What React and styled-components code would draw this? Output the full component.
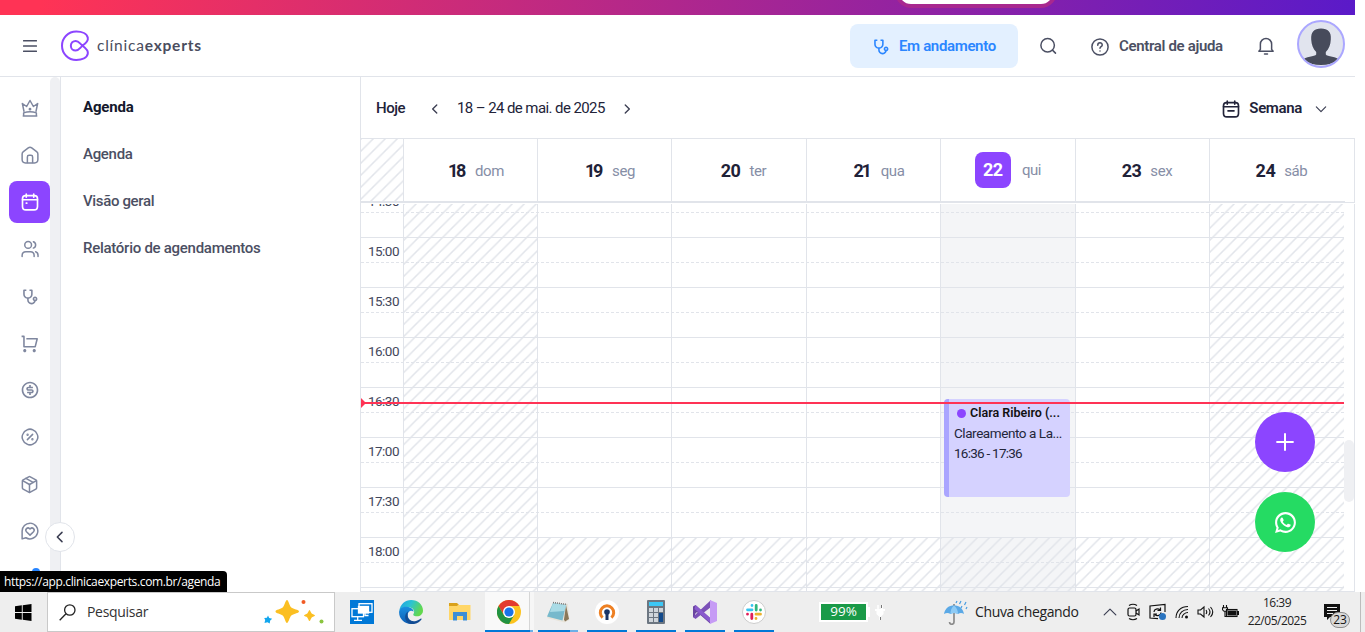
import React from "react";
import styled, { createGlobalStyle, css } from "styled-components";
import { Package } from "lucide-react";
import {
  RiStethoscopeLine,
  RiShoppingCartLine,
  RiMoneyDollarCircleLine,
  RiWhatsappLine,
} from "react-icons/ri";

const line = "#e1e4ea";
const purple = "#8c45ff";
const ui = `Roboto, "Liberation Sans", sans-serif`;
const system = `"Open Sans", "Noto Sans", sans-serif`;

const GlobalStyle = createGlobalStyle`
  * { box-sizing: border-box; }
  html, body { margin: 0; padding: 0; background: #fff; overflow: hidden; }
  body { font-family: ${ui}; }
  svg { flex: none; }
`;

const hatch = css`
  background-image: linear-gradient(
    135deg,
    ${line} 2.5%,
    transparent 6%,
    transparent 44%,
    ${line} 47.5%,
    ${line} 52.5%,
    transparent 56%,
    transparent 94%,
    ${line} 97.5%
  );
  background-size: 12.02px 12.02px;
`;

const Screen = styled.div`
  position: relative;
  width: 1365px;
  height: 632px;
  display: flex;
  flex-direction: column;
  background: #fff;
  overflow: hidden;
`;

const Label = styled.span`
  font-family: ${(p) => p.$font || ui};
  font-size: ${(p) => p.$size || 15}px;
  font-weight: ${(p) => p.$weight || 400};
  color: ${(p) => p.$color || "#222339"};
  letter-spacing: ${(p) => p.$ls || 0}px;
  line-height: 1.3;
  white-space: nowrap;
`;

/* ---------- promotional strip and header ---------- */

const Strip = styled.div`
  flex: none;
  width: 1355px;
  height: 15px;
  display: flex;
  padding-left: 895px;
  background: linear-gradient(100deg, #ff3355 3%, #5a1ac9 100%);
  overflow: hidden;
`;

const StripPill = styled.div`
  width: 162px;
  height: 32px;
  margin-top: -24px;
  border: 4px solid #a8288f;
  border-radius: 16px;
  background: #fff;
`;

const Header = styled.header`
  flex: none;
  width: 1355px;
  height: 62px;
  display: flex;
  align-items: center;
  border-bottom: 1px solid ${line};
  padding: 1px 10px 0 23px;
`;

const Brand = styled.div`
  display: flex;
  align-items: center;
  gap: 7px;
  margin-left: 23px;
  padding-bottom: 1px;
  flex: 1;
`;

const StatusButton = styled.button`
  display: flex;
  align-items: center;
  gap: 9px;
  width: 168px;
  height: 44px;
  padding: 1px 0 0 21px;
  border: 0;
  border-radius: 8px;
  background: #e3f0ff;
  color: #2b86ff;
`;

const HelpLink = styled.div`
  display: flex;
  align-items: center;
  gap: 10px;
  margin-left: 34px;
  padding-top: 1px;
  width: 133px;
`;

const Bell = styled.div`
  margin-left: 33px;
  display: flex;
`;

const SearchAction = styled.div`
  display: flex;
  margin-left: 21px;
`;

const Avatar = styled.div`
  width: 48px;
  height: 48px;
  margin: -4px 0 0 22px;
  border-radius: 50%;
  border: 2px solid #aba7ff;
  background: #e1e4ee;
  overflow: hidden;
`;

/* ---------- sidebar ---------- */

const Main = styled.div`
  flex: none;
  height: 515px;
  width: 1355px;
  display: flex;
  overflow: hidden;
`;

const Rail = styled.nav`
  flex: none;
  width: 50px;
  display: flex;
  flex-direction: column;
  padding: 10px 0 0 9px;
  gap: 5px;
`;

const RailItem = styled.div`
  flex: none;
  width: 41px;
  height: 42px;
  display: flex;
  align-items: center;
  justify-content: center;
  border-radius: 8px;
  color: ${(p) => (p.$active ? "#fff" : "#7f879f")};
  background: ${(p) => (p.$active ? purple : "transparent")};
`;

const RailTrack = styled.div`
  flex: none;
  width: 10px;
  border-radius: 5px 5px 0 0;
  background: #eff0f3;
`;

const Submenu = styled.aside`
  flex: none;
  width: 301px;
  border-left: 1px solid ${line};
  border-right: 1px solid ${line};
  padding: 17px 0 0 22px;
  display: flex;
  flex-direction: column;
`;

const SubmenuItem = styled(Label)`
  height: 47px;
  line-height: 26px;
`;

const CollapseButton = styled.div`
  position: absolute;
  left: 45px;
  top: 522px;
  width: 30px;
  height: 30px;
  border-radius: 50%;
  border: 1px solid ${line};
  background: #fff;
  display: flex;
  align-items: center;
  justify-content: center;
`;

const RailBadge = styled.div`
  position: absolute;
  left: 32px;
  top: 568px;
  width: 8px;
  height: 8px;
  border-radius: 50%;
  background: #2684ff;
`;

const LinkTooltip = styled.div`
  position: absolute;
  left: 0;
  top: 571px;
  width: 227px;
  height: 21px;
  padding-left: 4px;
  display: flex;
  align-items: center;
  background: #000;
  border-top-right-radius: 4px;
`;

/* ---------- calendar ---------- */

const Calendar = styled.section`
  position: relative;
  flex: 1;
  display: flex;
  flex-direction: column;
  border-bottom: 1px solid ${line};
`;

const Toolbar = styled.div`
  flex: none;
  height: 61px;
  padding: 2px 27px 0 15px;
  display: flex;
  align-items: center;
`;

const Spacer = styled.div`
  flex: 1;
`;

const Arrow = styled.div`
  display: flex;
  margin: ${(p) => p.$m};
`;

const columns = "43px 134px 134px 135px 134px 135px 134px";

const DaysHeader = styled.div`
  flex: none;
  height: 65px;
  display: grid;
  grid-template-columns: ${columns} 145px;
  border-top: 1px solid ${line};
  border-bottom: 1px solid ${line};
  position: relative;
  &::after {
    content: "";
    position: absolute;
    left: 0;
    right: 10px;
    bottom: -1px;
    height: 2px;
    background: ${line};
  }
`;

const Corner = styled.div`
  ${hatch};
  border-right: 1px solid ${line};
`;

const DayHead = styled.div`
  display: flex;
  align-items: center;
  justify-content: center;
  gap: ${(p) => (p.$today ? 11 : 9)}px;
  padding-top: ${(p) => (p.$today ? 0 : 1)}px;
  padding-bottom: ${(p) => (p.$today ? 1 : 0)}px;
  padding-left: ${(p) => (p.$today ? 0 : 9)}px;
  padding-right: ${(p) => (p.$last ? 10 : 0)}px;
  border-right: 1px solid ${line};
`;

const DayNumber = styled(Label)`
  letter-spacing: ${(p) => (p.$narrow ? -2.3 : -0.5)}px;
  margin: 0 ${(p) => (p.$narrow ? 2 : 0)}px;
`;

const DayName = styled(Label)`
  padding-top: 2px;
`;

const TodayBox = styled.div`
  width: 36px;
  height: 36px;
  border-radius: 8px;
  background: ${purple};
  display: flex;
  align-items: center;
  justify-content: center;
`;

const Body = styled.div`
  position: relative;
  flex: 1;
  margin-top: 1px;
  border-right: 1px solid ${line};
  overflow: hidden;
`;

const ColumnLayer = styled.div`
  position: absolute;
  inset: 0 9px 0 0;
  display: grid;
  grid-template-columns: ${columns} 134px;
`;

const Column = styled.div`
  display: flex;
  flex-direction: column;
  border-right: ${(p) => (p.$last ? 0 : 1)}px solid ${line};
  background: ${(p) => (p.$today ? "#f4f5f7" : "transparent")};
`;

const OffHours = styled.div`
  ${hatch};
  height: ${(p) => (p.$full ? "100%" : "53px")};
  margin-top: ${(p) => (p.$full ? 0 : 334)}px;
`;

const SlotList = styled.div`
  position: relative;
  width: 983px;
`;

const Slot = styled.div`
  height: ${(p) => (p.$first ? 9 : 25)}px;
  display: flex;
  align-items: flex-end;
  border-bottom: 1px ${(p) => (p.$half ? "solid" : "dashed")} ${line};
`;

const SlotTime = styled.div`
  flex: none;
  width: 42px;
  height: 24px;
  padding: 3px 4px 0 0;
  display: flex;
  align-items: center;
  justify-content: flex-end;
`;

const Appointment = styled.div`
  position: absolute;
  left: 583px;
  top: 195px;
  width: 126px;
  height: 98px;
  padding: 4px 3px 0 5px;
  border-left: 5px solid #aaa5ff;
  border-radius: 4px;
  background: #d5d2ff;
  display: flex;
  flex-direction: column;
`;

const AppointmentRow = styled.div`
  display: flex;
  align-items: center;
  gap: 4px;
  height: 20.3px;
  padding-left: ${(p) => (p.$title ? 3 : 0)}px;
`;

const Dot = styled.i`
  flex: none;
  width: 9px;
  height: 9px;
  border-radius: 50%;
  background: ${purple};
`;

const NowLine = styled.div`
  position: absolute;
  left: 0;
  top: 198px;
  width: 983px;
  height: 2px;
  background: #ff3355;
  &::before {
    content: "";
    position: absolute;
    left: 0;
    top: -4px;
    border: 5px solid transparent;
    border-left-color: #ff3355;
    border-right-width: 0;
  }
`;

const Thumb = styled.div`
  position: absolute;
  right: 1px;
  top: 363px;
  width: 10px;
  height: 62px;
  border-radius: 5px;
  background: #eff0f3;
`;

const Fab = styled.div`
  position: absolute;
  left: 1255px;
  top: ${(p) => p.$top}px;
  width: 60px;
  height: 60px;
  border-radius: 50%;
  background: ${(p) => p.$bg};
  color: #fff;
  display: flex;
  align-items: center;
  justify-content: center;
`;

/* ---------- taskbar ---------- */

const Taskbar = styled.footer`
  flex: none;
  height: 40px;
  display: flex;
  background: #eee;
`;

const Start = styled.div`
  width: 47px;
  display: flex;
  align-items: center;
  padding-left: 15px;
`;

const SearchBox = styled.div`
  width: 288px;
  height: 40px;
  display: flex;
  align-items: center;
  gap: 11px;
  border: 1px solid #c9c9c9;
  background: #fff;
  padding: 0 9px 0 11px;
`;

const TaskApps = styled.div`
  display: flex;
  margin-left: 3px;
`;

const TaskApp = styled.div`
  position: relative;
  width: 49px;
  height: 40px;
  display: flex;
  align-items: center;
  justify-content: center;
  padding-right: 1px;
  background: ${(p) => (p.$active ? "linear-gradient(90deg,#f9f9f9 44px,#d6d6d6 44px 45px,#f6f6f6 45px)" : "none")};
  &::after {
    content: "";
    display: ${(p) => (p.$open ? "block" : "none")};
    position: absolute;
    bottom: 0;
    left: ${(p) => (p.$active ? 0 : 4)}px;
    width: ${(p) => (p.$active ? 48 : 40)}px;
    height: 2px;
    background: ${(p) =>
      p.$stacked
        ? `linear-gradient(90deg,#0078d7 ${p.$stacked}px,#6cb0e8 ${p.$stacked}px)`
        : "#0078d7"};
  }
`;

const Battery = styled.div`
  width: 49px;
  height: 20px;
  margin: 10px 0 0 40px;
  border: 2px solid #fff;
  background: #1a9a48;
  display: flex;
  align-items: center;
  justify-content: center;
`;

const Nub = styled.div`
  width: 2px;
  height: 10px;
  margin-top: 15px;
  background: #fff;
`;

const Plug = styled.div`
  display: flex;
  margin: 12px 0 0 4px;
`;

const Weather = styled.div`
  display: flex;
  align-items: center;
  gap: 7px;
  margin-left: 58px;
  width: 159px;
`;

const Tray = styled.div`
  display: flex;
  align-items: center;
  gap: 8px;
`;

const Clock = styled.div`
  width: 74px;
  display: flex;
  flex-direction: column;
  align-items: center;
  padding-top: 3px;
  margin-left: 1px;
  gap: 2px;
`;

const Notices = styled.div`
  display: flex;
  margin: 12px 0 0 10px;
  position: relative;
`;

const NoticeCount = styled.div`
  position: absolute;
  left: 6px;
  top: 8px;
  width: 20px;
  height: 16px;
  border-radius: 8px;
  border: 1px solid #8d8d8d;
  background: #d9d9d9;
  display: flex;
  align-items: center;
  justify-content: center;
`;

const ShowDesktop = styled.div`
  width: 1px;
  margin: 0 4px 0 auto;
  background: #bcbcbc;
`;

/* ---------- icons ---------- */

const Stroke = ({ size = 18, w = 2, color = "currentColor", children }) => (
  <svg width={size} height={size} viewBox="0 0 24 24" fill="none" stroke={color} strokeWidth={w} strokeLinecap="round" strokeLinejoin="round">
    {children}
  </svg>
);

const Crown = () => (
  <Stroke>
    <path d="M4 16.500 1.800 6l5.700 4L12 2l4.500 8 5.700-4L20 16.500" />
    <path d="M3 22.500h18M3.500 22.500v-4q8.500-3 17 0v4" />
    <circle cx="12" cy="13.500" r=".9" fill="currentColor" />
  </Stroke>
);

const Home = () => (
  <Stroke>
    <path d="M1.500 10.800c0-1.500.5-2.400 1.700-3.300l6.500-5c1.400-1.100 3.200-1.100 4.600 0l6.500 5c1.200.9 1.700 1.800 1.700 3.300V18c0 2.500-1.500 4.500-4.500 4.500H6c-3 0-4.500-2-4.500-4.500z" />
    <path d="M8.500 22v-7.500c0-1.400.8-2.200 2.200-2.200h2.600c1.400 0 2.200.8 2.200 2.200V22" />
  </Stroke>
);

const CalendarIcon = ({ kind, color }) => (
  <Stroke w={2.200} color={color}>
    <path d="M7 1.500v4M17 1.500v4M2 9h20" />
    <path d="M6 3.500h12c2.500 0 4 1.500 4 4V18c0 2.800-1.500 4.500-4.500 4.500h-11C3.500 22.500 2 20.800 2 18V7.500c0-2.500 1.500-4 4-4z" />
    {kind === "dot" ? <path d="M7 13.500h.8" /> : <path d="M8 14.500h8" />}
  </Stroke>
);

const Users = () => (
  <Stroke>
    <circle cx="9.500" cy="6.500" r="4.500" />
    <path d="M1.500 22v-1.500c0-3 2-5 5-5h6c3 0 5 2 5 5V22M16.500 2.300a4.500 4.500 0 0 1 0 8.500M19.500 15.700c2 .7 3.200 2.400 3.200 4.600V22" />
  </Stroke>
);

const Discount = () => (
  <Stroke>
    <path d="M8 2.600q4-2.200 8 0 4 1.300 5.400 5.400 2.200 4 0 8-1.400 4.100-5.400 5.400-4 2.200-8 0-4-1.300-5.400-5.400-2.200-4 0-8Q4 3.900 8 2.600z" />
    <path d="M8.500 15.500l7-7" />
    <circle cx="8.800" cy="9" r=".6" fill="currentColor" />
    <circle cx="15.200" cy="15" r=".6" fill="currentColor" />
  </Stroke>
);

const ChatHeart = () => (
  <Stroke>
    <path d="M12 1.500A10.500 10.500 0 1 1 6.500 21L1.500 22.500V12A10.500 10.500 0 0 1 12 1.500z" />
    <path d="M12 17.500l-4.700-4.600a2.900 2.900 0 0 1 4.100-4.100l.6.600.6-.6a2.900 2.900 0 0 1 4.100 4.100z" />
  </Stroke>
);

const Logo = () => (
  <svg width="30" height="32" viewBox="0 0 30 32" fill="none" stroke={purple} strokeWidth="2" strokeLinejoin="round">
    <path d="M22.500 15.700C26.500 13 28.400 11 27.800 7.800 27 3.800 22 1.600 16.300 1.600 8 1.600 2 8 2 15.700s6 14.200 14.300 14.200c5.700 0 10.700-2.200 11.500-6.200.6-3.200-1.300-5.200-5.300-8C20 13.800 18.800 10.900 15.700 10.900a4.800 4.800 0 0 0 0 9.700c3.100 0 4.300-3 6.800-4.900z" />
  </svg>
);

const Chevron = ({ dir, size = 14, w = 2.3 }) => {
  const d = { left: "M15 5l-7 7 7 7", right: "M9 5l7 7-7 7", down: "M4 8.500l8 8 8-8", up: "M2 17L12 7l10 10" }[dir];
  return (
    <Stroke size={size} w={w} color="#3b3e52">
      <path d={d} />
    </Stroke>
  );
};

const Person = () => (
  <svg width="44" height="44" viewBox="0 0 44 44" fill="#474b5b">
    <path d="M22 6.500c7 0 10.500 3.500 9.800 11-.2 5-1.800 9.500-5 12.500v2.500c1 2 11.500 2 13.500 5.500Q32 42 22 42T3.700 38c2-3.500 12.500-3.500 13.500-5.500V30c-3.200-3-4.700-7.500-5-12.500C11.800 10 15 6.500 22 6.500z" />
    <path d="M3.700 37.500h36.600Q32 43 22 43T3.700 37.500z" />
  </svg>
);

const Windows = () => (
  <svg width="17" height="17" viewBox="0 0 17 17">
    <path d="M0 2.300 6.800 1.300V8H0zM7.700 1.200 16.500 0v8H7.700zM0 9h6.800v6.700L0 14.700zM7.700 9h8.800v8l-8.800-1.200z" />
  </svg>
);

const Magnifier = () => (
  <svg width="17" height="17" viewBox="0 0 17 17" fill="none" stroke="#222" strokeWidth="1.300">
    <circle cx="10.800" cy="6" r="5.200" />
    <path d="M7 9.800.7 16.200" />
  </svg>
);

const Sparkles = () => (
  <svg width="62" height="26" viewBox="0 0 62 26">
    <path d="M24 1c1.500 0 2.500 6 4.300 7.500S36 10.700 36 12.500s-6 2.300-7.700 4S25.500 24 24 24s-2.500-6-4.300-7.500-7.200-2.200-7.200-4 5.500-2.500 7.200-4S22.500 1 24 1z" fill="#fbbf22" />
    <path d="M46.500 11c.7 0 1.300 2.700 2.200 3.500s3.300 1.200 3.300 1.900-2.600 1.200-3.300 2-1.500 3.600-2.200 3.600-1.500-2.800-2.200-3.600-3.300-1.200-3.300-1.900 2.400-1.200 3.300-2 1.500-3.500 2.200-3.500z" fill="#fbbf22" />
    <path d="M5 16.500l1.200 2.500 3 .7-2 1.800-.5 3-2.200-1.200-3 .7.700-3-1-2 2.700-.3z" fill="#12a6ee" />
    <circle cx="40.500" cy="3" r="2" fill="#f15a24" />
    <circle cx="58.500" cy="22.500" r="2" fill="#8bc540" />
  </svg>
);

const Remote = () => (
  <svg width="24" height="24" viewBox="0 0 24 24" fill="none" stroke="#fff" strokeWidth="1.300">
    <rect width="24" height="24" fill="#0078d7" stroke="none" />
    <rect x="9" y="3.700" width="13" height="8.600" />
    <rect x="2" y="8.700" width="11.500" height="8" fill="#0078d7" />
    <rect x="8.500" y="6.500" width="10" height="6.500" fill="#fff" />
    <path d="M7.700 17v3M4 20.300h8M15 13v2.500h3.500" />
  </svg>
);

const Edge = () => (
  <svg width="24" height="24" viewBox="0 0 24 24">
    <defs>
      <linearGradient id="edgeTop" x1="0" y1="0" x2="1" y2=".4">
        <stop offset="0" stopColor="#1d9fe6" />
        <stop offset=".5" stopColor="#2cc3d2" />
        <stop offset="1" stopColor="#62d84e" />
      </linearGradient>
      <linearGradient id="edgeLow" x1="0" y1="0" x2="0" y2="1">
        <stop offset="0" stopColor="#1a8fe0" />
        <stop offset="1" stopColor="#0d5db3" />
      </linearGradient>
    </defs>
    <path d="M.3 11C1 4.500 6 0 12.200 0 19 0 24 4.700 24 10.500c0 3.500-2.700 5.800-6 5.800-3.600 0-4.200-1.300-3.400-2.500 1.300-2 .5-5.300-3.500-6.300C6.500 6.500 1.500 8 .3 11z" fill="url(#edgeTop)" />
    <path d="M.1 12.500C.1 8.600 3.500 6.200 8 6.800c4 .5 6.600 2.500 6.500 5-2-2-6-.8-5.700 3.700.2 4.500 5 7.300 9.200 6.400C15.500 23.500 13.800 24 12 24 5.400 24 .1 18.700.1 12.500z" fill="url(#edgeLow)" />
    <path d="M9.300 11.500c-2.800 5.500 1.200 10.700 6.700 9.700 2.500-.3 4.500-1.600 5.900-2.600.4-.3 1 .2.700.7-2.200 3.600-7 5.500-11.600 4.500-5.700-1.600-6.600-9.800-1.700-12.300z" fill="#124c93" />
  </svg>
);

const Folder = () => (
  <svg width="22" height="20" viewBox="0 0 22 20">
    <path d="M0 1h8l2 2v4H0z" fill="#d9a11b" />
    <path d="M9 3h12.500v15H0V4h8z" fill="#ffd667" />
    <path d="M4 10h14v8.500h-4V14H8v4.500H4z" fill="#3c8fd6" />
  </svg>
);

const Chrome = () => (
  <svg width="24" height="24" viewBox="0 0 24 24">
    <circle cx="12" cy="12" r="12" fill="#fcc31e" />
    <path d="M1.600 6A12 12 0 0 1 22.400 6H12L7 15z" fill="#e33b2e" />
    <path d="M1.600 6A12 12 0 0 0 12 24l5.200-9L12 18 6.800 15z" fill="#229342" />
    <circle cx="12" cy="12" r="6" fill="#fff" />
    <circle cx="12" cy="12" r="4.600" fill="#1a73e8" />
  </svg>
);

const Notepad = () => (
  <svg width="24" height="24" viewBox="0 0 24 24">
    <path d="M8 3l14 1 1.500 16-5 2.500L1 18z" fill="#e8e4da" />
    <path d="M20 5l3 14-4 2.500-1-2z" fill="#8a7758" />
    <path d="M7 3l13 2-3.500 15.500L1 16.500z" fill="#76b9cc" />
    <path d="M7 3l13 2-1.500 6L4 12z" fill="#a9dbe6" />
    <path d="M7 2.500l14 2" stroke="#777" strokeWidth="1.500" strokeDasharray="1 1" />
  </svg>
);

const OpenVpn = () => (
  <svg width="24" height="24" viewBox="0 0 24 24">
    <circle cx="12" cy="12" r="12" fill="#fff" />
    <path d="M7.600 17.600a6.700 6.700 0 1 1 8.800 0" fill="none" stroke="#ee8023" strokeWidth="3" />
    <circle cx="12" cy="12" r="2.800" fill="#1b3566" />
    <path d="M10.500 13h3v7h-3z" fill="#1b3566" />
  </svg>
);

const Calculator = () => (
  <svg width="18" height="24" viewBox="0 0 18 24">
    <rect width="18" height="24" rx="1" fill="#6c7681" />
    <rect x="2" y="2" width="14" height="4" fill="#3cc7f5" />
    <g fill="#cfd5db">
      {[8, 13, 18].map((y) =>
        [2, 7, 12].map((x) => <rect key={`${x}-${y}`} x={x} y={y} width="4" height="4" />)
      )}
    </g>
    <rect x="12" y="13" width="4" height="9" fill="#124a8c" />
  </svg>
);

const VisualStudio = () => (
  <svg width="24" height="24" viewBox="0 0 24 24">
    <path d="M0 6.500 2.500 5 17 18v5.500L4 12l-2 2v4L0 17z" fill="#6a45a0" />
    <path d="M0 17l2.500 2L18 7V0L3 14z" fill="#7c51b8" />
    <path d="M2.500 5 18 18.500v5L1.500 9z" fill="#8a5bcd" />
    <path d="M17 0l7 3v18l-7 3z" fill="#c69bf5" />
  </svg>
);

const Slack = () => (
  <svg width="24" height="24" viewBox="0 0 24 24">
    <circle cx="12" cy="12" r="11.500" fill="#fff" stroke="#ccc" />
    <g strokeWidth="2.800" strokeLinecap="round">
      <path d="M10 5.500h.01M5.500 9.800H10" stroke="#36c5f0" />
      <path d="M18.500 10h.01M14.200 5.500V10" stroke="#2eb67d" />
      <path d="M14 18.500h.01M14 14.200h4.500" stroke="#ecb22e" />
      <path d="M5.500 14.200h.01M9.800 14.200v4.300" stroke="#e01e5a" />
    </g>
  </svg>
);

const PlugIcon = () => (
  <svg width="12" height="17" viewBox="0 0 12 17">
    <path d="M1 5h10v2H9.500v3L7 12.500H5L2.500 10V7H1z" fill="#fff" />
    <path d="M4 1v4M8 1v4M6 12v4" stroke="#fff" strokeWidth="1.500" />
    <path d="M7.500 1v3M6.500 13v3" stroke="#777" strokeWidth="1" />
  </svg>
);

const Umbrella = () => (
  <svg width="24" height="25" viewBox="0 0 24 25">
    <path d="M10 4v18c0 3-4.500 3-4.500 0" fill="none" stroke="#8b8b8b" strokeWidth="1.700" />
    <path d="M0 14C1 8 5 5.500 10 5.500S19 8 20 14q-3-2-6 0-4-2-7.500 0-3-2-6.500 0z" fill="#5ba9e6" />
    <path d="M10 5.500C7 8 6.500 11 6.500 14q3.500-2 7.500 0c0-3-1-6-4-8.500z" fill="#8fcbf5" />
    <path d="M13 1l-1 2M17 1l-1.500 3M22 2l-1.500 3M18 6l-1 2M23 7l-1 2" stroke="#4a9de0" strokeWidth="1.200" />
  </svg>
);

const Meet = () => (
  <svg width="14" height="18" viewBox="0 0 14 18" fill="none" stroke="#111" strokeWidth="1.200">
    <path d="M2 2.500q4-2.500 8 0M2 15.500q4 2.500 8 0" />
    <rect x="1" y="5" width="8" height="8" rx="1.500" />
    <path d="M9 8l3-2v6l-3-2" />
  </svg>
);

const Sync = () => (
  <svg width="18" height="18" viewBox="0 0 18 18" fill="none" stroke="#111" strokeWidth="1.200">
    <path d="M16 9V1.500L1 3v12l8 .7M5 9c0-3 4-4 6-2M11.500 4.500v3H8.500M12 9.500c0 3-4 4-6 2M5 14v-3h3" />
    <circle cx="13.500" cy="13.500" r="3.500" fill="#2a74c0" stroke="none" />
  </svg>
);

const Wifi = () => (
  <svg width="14" height="14" viewBox="0 0 14 14" fill="none" stroke="#111" strokeWidth="1.100">
    <path d="M1 13C1 6 6 1.500 13 1.500M4 13c0-5 4-8.500 9-8.500M7 13c0-3 3-5.500 6-5.500" />
    <circle cx="11.500" cy="12" r="1.500" fill="#111" stroke="none" />
  </svg>
);

const Speaker = () => (
  <svg width="17" height="14" viewBox="0 0 17 14" fill="none" stroke="#111" strokeWidth="1.100">
    <path d="M1 5h2.500L7 2v10L3.500 9H1zM9 5q1.500 2 0 4M11.500 3.500q3 3.500 0 7M13.500 2q4.500 5 0 10" />
  </svg>
);

const BatteryIcon = () => (
  <svg width="17" height="14" viewBox="0 0 17 14" fill="none" stroke="#111" strokeWidth="1.100">
    <rect x="4.500" y="4.500" width="10.500" height="7" />
    <path d="M6 6h7.500v4H6zM15.500 6.500h1v3h-1z" fill="#111" />
    <path d="M1.500 0v2.500M4.500 0v2.500M.5 2.800h5v2l-1.500 1.500H2L.5 4.800zM3 6v5.500h2" />
  </svg>
);

const Message = () => (
  <svg width="17" height="17" viewBox="0 0 17 17">
    <path d="M0 0h16v13H6l-3 3v-3H0z" fill="#111" />
    <path d="M3 3.500h10M3 6.500h10M3 9.500h6" stroke="#eee" strokeWidth="1" />
  </svg>
);

/* ---------- data ---------- */

const railIcons = [
  <Crown />,
  <Home />,
  <CalendarIcon kind="dot" />,
  <Users />,
  <RiStethoscopeLine size={19} />,
  <RiShoppingCartLine size={19} />,
  <RiMoneyDollarCircleLine size={20} />,
  <Discount />,
  <Package size={19} strokeWidth={1.9} />,
  <ChatHeart />,
];

const days = [
  { n: 18, name: "dom", off: true },
  { n: 19, name: "seg" },
  { n: 20, name: "ter" },
  { n: 21, name: "qua" },
  { n: 22, name: "qui", today: true },
  { n: 23, name: "sex" },
  { n: 24, name: "sáb", off: true },
];

const slots = ["14:30", "", "15:00", "", "15:30", "", "16:00", "", "16:30", "", "17:00", "", "17:30", "", "18:00", "", ""];

const apps = [
  { icon: <Remote /> },
  { icon: <Edge /> },
  { icon: <Folder /> },
  { icon: <Chrome />, open: true, active: true, stacked: 45 },
  { icon: <Notepad />, open: true, stacked: 32 },
  { icon: <OpenVpn />, open: true },
  { icon: <Calculator />, open: true },
  { icon: <VisualStudio />, open: true },
  { icon: <Slack />, open: true },
];

export default function App() {
  return (
    <Screen>
      <GlobalStyle />
      <Strip>
        <StripPill />
      </Strip>
      <Header>
        <Stroke size={14} w={2.600} color="#4b4f63">
          <path d="M1 3h22M1 12h22M1 21h22" />
        </Stroke>
        <Brand>
          <Logo />
          <Label $font={`Lato, sans-serif`} $size={15.500} $color="#4a4d5e" $ls={0.780}>
            clínica<b>experts</b>
          </Label>
        </Brand>
        <StatusButton>
          <RiStethoscopeLine size={19} />
          <Label $weight={600} $color="#2b86ff" $ls={-0.350}>Em andamento</Label>
        </StatusButton>
        <SearchAction>
          <Stroke size={18} color="#4b4f63">
            <circle cx="11.500" cy="11" r="9" />
            <path d="M18 17.500l4 4" />
          </Stroke>
        </SearchAction>
        <HelpLink>
          <Stroke size={18} color="#4b4f63">
            <circle cx="12" cy="12" r="10.800" />
            <path d="M9 9.500c0-4 6-4 6-.3 0 2.300-3 2.300-3 4.500M12 17.200v.1" />
          </Stroke>
          <Label $weight={600} $color="#4b4f63" $ls={-0.330}>Central de ajuda</Label>
        </HelpLink>
        <Bell>
          <Stroke size={18} color="#4b4f63">
            <path d="M4.500 16.500V9.500a7.500 7.500 0 0 1 15 0v7l2 2.500h-19zM10 22.500h4" />
          </Stroke>
        </Bell>
        <Avatar>
          <Person />
        </Avatar>
      </Header>
      <Main>
        <Rail>
          {railIcons.map((icon, i) => (
            <RailItem key={i} $active={i === 2}>{icon}</RailItem>
          ))}
        </Rail>
        <RailTrack />
        <Submenu>
          <SubmenuItem $weight={700} $color="#14182c" $ls={-0.150}>Agenda</SubmenuItem>
          <SubmenuItem $weight={500} $color="#4b4f63" $ls={-0.300}>Agenda</SubmenuItem>
          <SubmenuItem $weight={500} $color="#4b4f63" $ls={-0.350}>Visão geral</SubmenuItem>
          <SubmenuItem $weight={500} $color="#4b4f63" $ls={-0.270}>Relatório de agendamentos</SubmenuItem>
        </Submenu>
        <Calendar>
          <Toolbar>
            <Label $weight={500} $ls={-0.500}>Hoje</Label>
            <Arrow $m="0 15px 0 23px"><Chevron dir="left" /></Arrow>
            <Label $size={15} $ls={-0.590}>18 – 24 de mai. de 2025</Label>
            <Arrow $m="0 0 0 15px"><Chevron dir="right" /></Arrow>
            <Spacer />
            <CalendarIcon color="#222339" />
            <Arrow $m="0 12px 0 9px"><Label $weight={600} $ls={-0.350}>Semana</Label></Arrow>
            <Chevron dir="down" w={2} />
          </Toolbar>
          <DaysHeader>
            <Corner />
            {days.map((d, i) => (
              <DayHead key={d.n} $today={d.today} $last={i === 6}>
                {d.today ? (
                  <TodayBox>
                    <DayNumber $size={18} $weight={700} $color="#fff">{d.n}</DayNumber>
                  </TodayBox>
                ) : (
                  <DayNumber $size={18} $weight={700} $color="#1f2238" $narrow={String(d.n).includes("1")}>{d.n}</DayNumber>
                )}
                <DayName $color="#868ea6" $ls={-0.400}>{d.name}</DayName>
              </DayHead>
            ))}
          </DaysHeader>
          <Body>
            <ColumnLayer>
              <Column />
              {days.map((d, i) => (
                <Column key={d.n} $today={d.today} $last={i === 6}>
                  <OffHours $full={d.off} />
                </Column>
              ))}
            </ColumnLayer>
            <SlotList>
              {slots.map((s, i) => (
                <Slot key={i} $first={i === 0} $half={i % 2 === 1}>
                  <SlotTime>
                    <Label $size={13.500} $color="#43475b" $ls={-0.500}>{s}</Label>
                  </SlotTime>
                </Slot>
              ))}
            </SlotList>
            <Appointment>
              <AppointmentRow $title>
                <Dot />
                <Label $size={12.500} $weight={600} $color="#111">Clara Ribeiro (...</Label>
              </AppointmentRow>
              <AppointmentRow>
                <Label $size={13.500} $color="#23263a" $ls={-0.430}>Clareamento a La...</Label>
              </AppointmentRow>
              <AppointmentRow>
                <Label $size={13.500} $color="#23263a" $ls={-0.750}>16:36 - 17:36</Label>
              </AppointmentRow>
            </Appointment>
            <NowLine />
          </Body>
          <Thumb />
        </Calendar>
      </Main>
      <Fab $top={412} $bg={purple}>
        <Stroke size={20} w={2.400}><path d="M12 2.500v19M2.500 12h19" /></Stroke>
      </Fab>
      <Fab $top={492} $bg="#25db63">
        <RiWhatsappLine size={25} />
      </Fab>
      <RailBadge />
      <CollapseButton>
        <Chevron dir="left" size={16} />
      </CollapseButton>
      <LinkTooltip>
        <Label $font={system} $size={12} $color="#fff" $ls={-0.350}>https://app.clinicaexperts.com.br/agenda</Label>
      </LinkTooltip>
      <Taskbar>
        <Start><Windows /></Start>
        <SearchBox>
          <Magnifier />
          <Label $font={system} $size={14} $color="#333" $ls={-0.300}>Pesquisar</Label>
          <Spacer />
          <Sparkles />
        </SearchBox>
        <TaskApps>
          {apps.map((a, i) => (
            <TaskApp key={i} $open={a.open} $active={a.active} $stacked={a.stacked}>{a.icon}</TaskApp>
          ))}
        </TaskApps>
        <Battery>
          <Label $font={system} $size={13.500} $color="#fff">99%</Label>
        </Battery>
        <Nub />
        <Plug><PlugIcon /></Plug>
        <Weather>
          <Umbrella />
          <Label $font={system} $size={14} $color="#222" $ls={-0.350}>Chuva chegando</Label>
        </Weather>
        <Tray>
          <Chevron dir="up" w={2} />
          <Arrow $m="0 0 0 2px"><Meet /></Arrow>
          <Sync />
          <Wifi />
          <Speaker />
          <BatteryIcon />
        </Tray>
        <Clock>
          <Label $font={system} $size={12} $color="#222" $ls={-0.500}>16:39</Label>
          <Label $font={system} $size={12} $color="#222" $ls={-0.500}>22/05/2025</Label>
        </Clock>
        <Notices>
          <Message />
          <NoticeCount>
            <Label $font={system} $size={12} $color="#111">23</Label>
          </NoticeCount>
        </Notices>
        <ShowDesktop />
      </Taskbar>
    </Screen>
  );
}
